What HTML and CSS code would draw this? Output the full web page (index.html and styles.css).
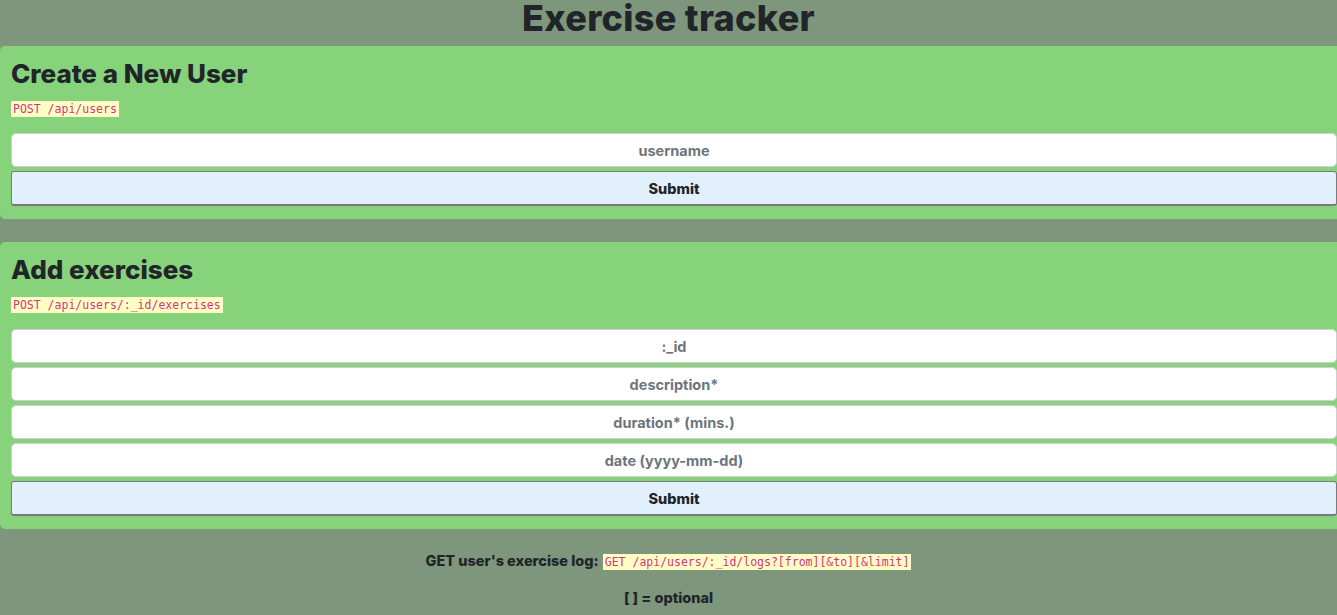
FILE: index.html
```html
<!DOCTYPE html>
<html>
<head>
<meta charset="utf-8">
<title>Exercise Tracker</title>
<link rel="stylesheet" href="styles.css">
</head>
<body>
<h1 class="title">Exercise tracker</h1>
<div class="card card-user">
  <h2 class="card-title">Create a New User</h2>
  <p class="endpoint"><code class="code">POST /api/users</code></p>
  <form class="form">
    <input class="field" type="text" placeholder="username">
    <button class="submit" type="button">Submit</button>
  </form>
</div>
<div class="card card-ex">
  <h2 class="card-title">Add exercises</h2>
  <p class="endpoint"><code class="code">POST /api/users/:_id/exercises</code></p>
  <form class="form">
    <input class="field" type="text" placeholder=":_id">
    <input class="field" type="text" placeholder="description*">
    <input class="field" type="text" placeholder="duration* (mins.)">
    <input class="field" type="text" placeholder="date (yyyy-mm-dd)">
    <button class="submit" type="button">Submit</button>
  </form>
</div>
<p class="info"><strong>GET user's exercise log:</strong> <code class="code">GET /api/users/:_id/logs?[from][&amp;to][&amp;limit]</code></p>
<p class="info"><strong>[ ] = optional</strong></p>
</body>
</html>
```
FILE: styles.css
```css
html, body {
  margin: 0;
  padding: 0;
  overflow: hidden;
}
body {
  background: #7e967b;
  color: #212529;
  font-family: Inter, "Liberation Sans", sans-serif;
}
.title {
  margin: 0;
  height: 46px;
  line-height: 36px;
  font-size: 36px;
  font-weight: 800;
  letter-spacing: 0.3px;
  text-align: center;
}
.card {
  background: #87d37c;
  border-radius: 5px;
  width: calc(100% + 10px);
  box-sizing: border-box;
  padding: 12px 10px 13px 11px;
}
.card-ex {
  margin-top: 23px;
}
.card-title {
  margin: 0;
  font-size: 26px;
  line-height: 32px;
  font-weight: 800;
}
.endpoint {
  margin: 9px 0 0;
  height: 17px;
  line-height: 17px;
}
.code {
  font-family: "DejaVu Sans Mono", "Liberation Mono", monospace;
  font-size: 11.5px;
  color: #d63384;
  background: #ffffc4;
  padding: 1px 2px;
}
.form {
  margin: 17px 0 0;
  display: flex;
  flex-direction: column;
  gap: 4px;
}
.field {
  display: block;
  width: 100%;
  height: 34px;
  box-sizing: border-box;
  border: 1px solid #cfcfcf;
  border-radius: 5px;
  background: #fff;
  text-align: center;
  font-family: inherit;
  font-weight: 700;
  font-size: 14.5px;
  color: #495057;
  margin: 0;
}
.field::placeholder {
  color: #6c757d;
  opacity: 1;
}
.submit {
  display: block;
  width: 100%;
  height: 35px;
  box-sizing: border-box;
  background: #e2f0fe;
  border: 1px solid #7a7a7a;
  border-bottom-width: 2px;
  border-radius: 3px;
  font-family: inherit;
  font-weight: 800;
  font-size: 14.5px;
  color: #212529;
  margin: 0;
}
.info {
  text-align: center;
  font-size: 14.5px;
  margin: 22px 0 0;
  line-height: 20px;
}
.info + .info {
  margin-top: 16px;
}
.info strong {
  font-weight: 800;
}
```
